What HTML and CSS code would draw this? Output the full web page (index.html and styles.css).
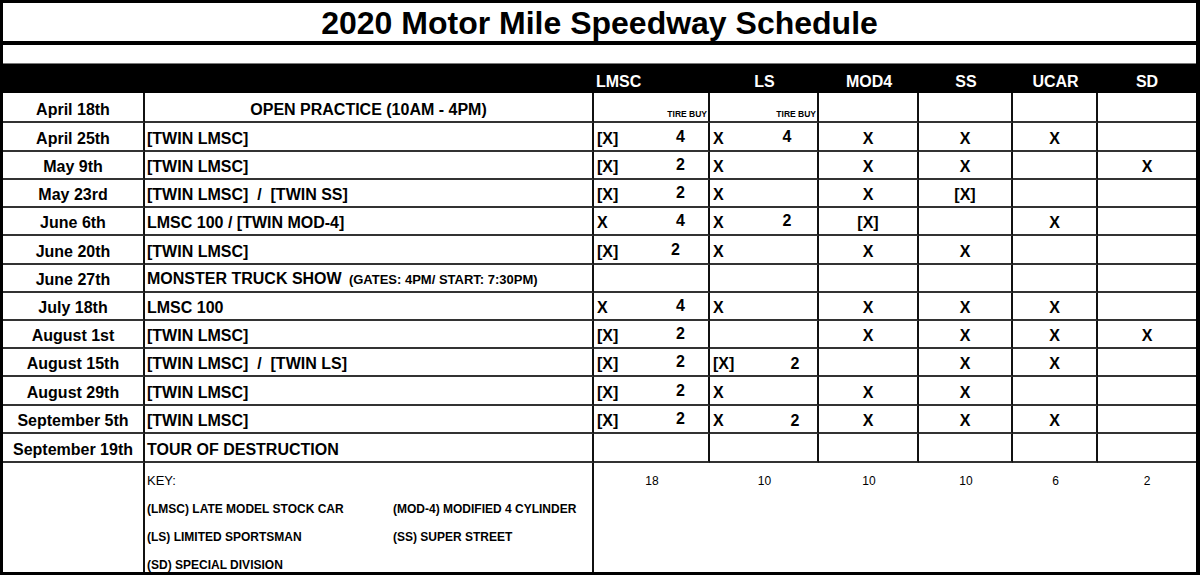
FILE: index.html
```html
<!DOCTYPE html>
<html lang="en">
<head>
<meta charset="utf-8">
<title>2020 Motor Mile Speedway Schedule</title>
<link rel="stylesheet" href="styles.css">
</head>
<body>
<div class="sheet">
  <div class="title">2020 Motor Mile Speedway Schedule</div>
  <div class="blank"></div>
  <table class="sched">
    <colgroup>
      <col class="c-date"><col class="c-event"><col class="c-lx"><col class="c-ln"><col class="c-sx"><col class="c-sn"><col class="c-mod"><col class="c-ss"><col class="c-ucar"><col class="c-sd">
    </colgroup>
    <thead>
      <tr class="hdr">
        <th></th><th></th>
        <th colspan="2" class="left">LMSC</th>
        <th colspan="2">LS</th>
        <th>MOD4</th><th>SS</th><th>UCAR</th><th>SD</th>
      </tr>
    </thead>
    <tbody>
      <tr class="r30">
        <td class="date">April 18th</td>
        <td class="event center">OPEN PRACTICE (10AM - 4PM)</td>
        <td class="x nr"></td><td class="tire">TIRE BUY</td>
        <td class="x nr"></td><td class="tire">TIRE BUY</td>
        <td></td><td></td><td></td><td class="nr"></td>
      </tr>
      <tr class="r29">
        <td class="date">April 25th</td>
        <td class="event">[TWIN LMSC]</td>
        <td class="x nr">[X]</td><td class="n">4</td>
        <td class="x nr">X</td><td class="n">4</td>
        <td class="center">X</td><td class="center">X</td><td class="center">X</td><td class="center nr"></td>
      </tr>
      <tr class="r28">
        <td class="date">May 9th</td>
        <td class="event">[TWIN LMSC]</td>
        <td class="x nr">[X]</td><td class="n">2</td>
        <td class="x nr">X</td><td class="n"></td>
        <td class="center">X</td><td class="center">X</td><td class="center"></td><td class="center nr">X</td>
      </tr>
      <tr class="r28">
        <td class="date">May 23rd</td>
        <td class="event">[TWIN LMSC] &nbsp;/ &nbsp;[TWIN SS]</td>
        <td class="x nr">[X]</td><td class="n">2</td>
        <td class="x nr">X</td><td class="n"></td>
        <td class="center">X</td><td class="center">[X]</td><td class="center"></td><td class="center nr"></td>
      </tr>
      <tr class="r28">
        <td class="date">June 6th</td>
        <td class="event">LMSC 100 / [TWIN MOD-4]</td>
        <td class="x nr">X</td><td class="n">4</td>
        <td class="x nr">X</td><td class="n">2</td>
        <td class="center">[X]</td><td class="center"></td><td class="center">X</td><td class="center nr"></td>
      </tr>
      <tr class="r29">
        <td class="date">June 20th</td>
        <td class="event">[TWIN LMSC]</td>
        <td class="x nr">[X]</td><td class="n shift-l">2</td>
        <td class="x nr">X</td><td class="n"></td>
        <td class="center">X</td><td class="center">X</td><td class="center"></td><td class="center nr"></td>
      </tr>
      <tr class="r28">
        <td class="date">June 27th</td>
        <td class="event">MONSTER TRUCK SHOW<span class="small"> &nbsp;(GATES: 4PM/ START: 7:30PM)</span></td>
        <td class="x nr"></td><td class="n"></td>
        <td class="x nr"></td><td class="n"></td>
        <td></td><td></td><td></td><td class="nr"></td>
      </tr>
      <tr class="r28">
        <td class="date">July 18th</td>
        <td class="event">LMSC 100</td>
        <td class="x nr">X</td><td class="n">4</td>
        <td class="x nr">X</td><td class="n"></td>
        <td class="center">X</td><td class="center">X</td><td class="center">X</td><td class="center nr"></td>
      </tr>
      <tr class="r28">
        <td class="date">August 1st</td>
        <td class="event">[TWIN LMSC]</td>
        <td class="x nr">[X]</td><td class="n">2</td>
        <td class="x nr"></td><td class="n"></td>
        <td class="center">X</td><td class="center">X</td><td class="center">X</td><td class="center nr">X</td>
      </tr>
      <tr class="r28">
        <td class="date">August 15th</td>
        <td class="event">[TWIN LMSC] &nbsp;/ &nbsp;[TWIN LS]</td>
        <td class="x nr">[X]</td><td class="n">2</td>
        <td class="x nr">[X]</td><td class="n shift-r">2</td>
        <td class="center"></td><td class="center">X</td><td class="center">X</td><td class="center nr"></td>
      </tr>
      <tr class="r29">
        <td class="date">August 29th</td>
        <td class="event">[TWIN LMSC]</td>
        <td class="x nr">[X]</td><td class="n">2</td>
        <td class="x nr">X</td><td class="n"></td>
        <td class="center">X</td><td class="center">X</td><td class="center"></td><td class="center nr"></td>
      </tr>
      <tr class="r28">
        <td class="date">September 5th</td>
        <td class="event">[TWIN LMSC]</td>
        <td class="x nr">[X]</td><td class="n">2</td>
        <td class="x nr">X</td><td class="n shift-r">2</td>
        <td class="center">X</td><td class="center">X</td><td class="center">X</td><td class="center nr"></td>
      </tr>
      <tr class="r29">
        <td class="date">September 19th</td>
        <td class="event">TOUR OF DESTRUCTION</td>
        <td class="x nr"></td><td class="n"></td>
        <td class="x nr"></td><td class="n"></td>
        <td></td><td></td><td></td><td class="nr"></td>
      </tr>
      <tr class="key-row">
        <td class="date"></td>
        <td class="event key-cell">
          <div class="key">
            <div class="key-title">KEY:</div><div></div>
            <div>(LMSC) LATE MODEL STOCK CAR</div><div>(MOD-4) MODIFIED 4 CYLINDER</div>
            <div>(LS) LIMITED SPORTSMAN</div><div>(SS) SUPER STREET</div>
            <div>(SD) SPECIAL DIVISION</div><div></div>
          </div>
        </td>
        <td colspan="2" class="total">18</td>
        <td colspan="2" class="total">10</td>
        <td class="total">10</td>
        <td class="total">10</td>
        <td class="total">6</td>
        <td class="total">2</td>
      </tr>
    </tbody>
  </table>
</div>
</body>
</html>
```

FILE: styles.css
```css
html, body {
  margin: 0;
  padding: 0;
  background: #fff;
}

body {
  font-family: "Liberation Sans", Arial, sans-serif;
  color: #000;
}

.sheet {
  width: 1200px;
  height: 575px;
  box-sizing: border-box;
  border: 3px solid #000;
  border-right-width: 4px;
  overflow: hidden;
}

.title {
  height: 42px;
  box-sizing: border-box;
  border-bottom: 4px solid #000;
  padding-top: 3px;
  line-height: 35px;
  font-size: 32px;
  font-weight: 700;
  text-align: center;
}

.blank {
  height: 19px;
  box-sizing: border-box;
  border-bottom: 1px solid #777;
}

.sched {
  width: 1193px;
  border-collapse: separate;
  border-spacing: 0;
  table-layout: fixed;
}

.c-date { width: 142px; }
.c-event { width: 449px; }
.c-lx { width: 59px; }
.c-ln { width: 57px; }
.c-sx { width: 47px; }
.c-sn { width: 62px; }
.c-mod { width: 100px; }
.c-ss { width: 94px; }
.c-ucar { width: 85px; }
.c-sd { width: 98px; }

.hdr { height: 29px; }

.hdr th {
  background: #000;
  color: #fff;
  font-size: 16px;
  font-weight: 700;
  line-height: 18px;
  padding: 0 0 2px;
  vertical-align: bottom;
  text-align: center;
  white-space: nowrap;
}

.hdr th.left {
  text-align: left;
  padding-left: 2px;
}

.r28 { height: 28px; }
.r29 { height: 29px; }
.r30 { height: 30px; }

td {
  box-sizing: border-box;
  border-bottom: 2px solid #333;
  border-right: 2px solid #111;
  padding: 0 2px 2px;
  vertical-align: bottom;
  font-size: 16px;
  font-weight: 700;
  line-height: 18px;
  white-space: nowrap;
  overflow: hidden;
}

td.nr { border-right: none; }

td.date { text-align: center; }
td.center { text-align: center; }
td.event { padding-left: 2px; }
td.event.center { text-align: center; }

td.x { padding-left: 3px; }

td.n {
  text-align: center;
  padding-bottom: 4px;
}

td.n.shift-l { padding-right: 12px; }
td.n.shift-r { padding-left: 18px; padding-bottom: 2px; }

td.tire {
  text-align: right;
  font-size: 8.5px;
  line-height: 10px;
  padding: 0 1px 2px 0;
}

.small { font-size: 13px; }

.key-row { height: 109px; }

.key-row td {
  border-bottom: none;
  vertical-align: top;
}

.key-row td.total {
  border-right: none;
  font-weight: 400;
  font-size: 12px;
  line-height: 28px;
  padding: 4px 0 0;
  text-align: center;
}

.key-cell { padding: 4px 0 0 2px; }

.key {
  display: grid;
  grid-template-columns: 246px auto;
  grid-auto-rows: 28px;
  font-size: 12px;
  line-height: 28px;
  font-weight: 700;
}

.key-title { font-weight: 400; font-size: 13px; }
```
